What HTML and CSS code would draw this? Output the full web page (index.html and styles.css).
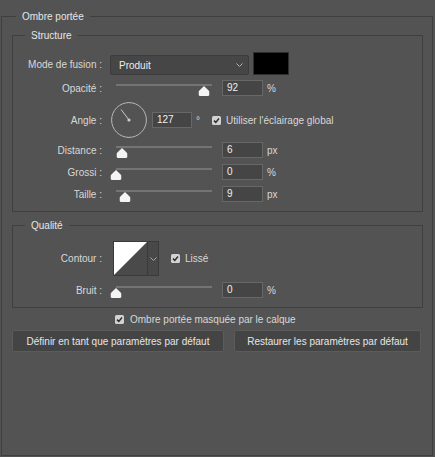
FILE: index.html
```html
<!DOCTYPE html>
<html lang="fr">
<head>
<meta charset="utf-8">
<title>Ombre portée</title>
<link rel="stylesheet" href="styles.css">
</head>
<body>
<fieldset class="dialog">
  <legend>Ombre portée</legend>

  <fieldset class="group structure">
    <legend>Structure</legend>

    <div class="row mode-row">
      <span class="lbl">Mode de fusion :</span>
      <div class="select">
        <span>Produit</span>
        <svg class="chev" width="7" height="4" viewBox="0 0 7 4"><polyline points="0.5,0.5 3.5,3.5 6.5,0.5" fill="none" stroke="#b4b4b4" stroke-width="1"/></svg>
      </div>
      <div class="swatch"></div>
    </div>

    <div class="row slider-row">
      <span class="lbl">Opacité :</span>
      <div class="slider"><div class="track"></div><svg class="thumb" style="left:92%" width="11" height="10" viewBox="0 0 11 10"><path d="M5.5 0 L10.6 5 Q11 5.4 11 6.2 L11 8.6 Q11 10 9.6 10 L1.4 10 Q0 10 0 8.6 L0 6.2 Q0 5.4 0.4 5 Z" fill="#f4f4f4"/></svg></div>
      <span class="field">92</span>
      <span class="unit">%</span>
    </div>

    <div class="row angle-row">
      <span class="lbl">Angle :</span>
      <svg class="dial" width="36" height="36" viewBox="0 0 36 36">
        <circle cx="18" cy="18" r="17.4" fill="none" stroke="#b9b9b9" stroke-width="1"/>
        <line x1="18" y1="18" x2="10" y2="7.4" stroke="#c8c8c8" stroke-width="1"/>
        <circle cx="18" cy="18" r="1.6" fill="#cfcfcf"/>
      </svg>
      <span class="field angle-field">127</span>
      <span class="unit">°</span>
      <svg class="check global-check" width="9" height="9" viewBox="0 0 9 9"><rect width="9" height="9" rx="1.6" fill="#d2d2d2"/><polyline points="2,4.6 3.8,6.4 7,2.5" fill="none" stroke="#2e2e2e" stroke-width="1.5"/></svg>
      <span class="check-text">Utiliser l'éclairage global</span>
    </div>

    <div class="row slider-row">
      <span class="lbl">Distance :</span>
      <div class="slider"><div class="track"></div><svg class="thumb" style="left:6.25%" width="11" height="10" viewBox="0 0 11 10"><path d="M5.5 0 L10.6 5 Q11 5.4 11 6.2 L11 8.6 Q11 10 9.6 10 L1.4 10 Q0 10 0 8.6 L0 6.2 Q0 5.4 0.4 5 Z" fill="#f4f4f4"/></svg></div>
      <span class="field">6</span>
      <span class="unit">px</span>
    </div>

    <div class="row slider-row">
      <span class="lbl">Grossi :</span>
      <div class="slider"><div class="track"></div><svg class="thumb" style="left:0%" width="11" height="10" viewBox="0 0 11 10"><path d="M5.5 0 L10.6 5 Q11 5.4 11 6.2 L11 8.6 Q11 10 9.6 10 L1.4 10 Q0 10 0 8.6 L0 6.2 Q0 5.4 0.4 5 Z" fill="#f4f4f4"/></svg></div>
      <span class="field">0</span>
      <span class="unit">%</span>
    </div>

    <div class="row slider-row">
      <span class="lbl">Taille :</span>
      <div class="slider"><div class="track"></div><svg class="thumb" style="left:9.4%" width="11" height="10" viewBox="0 0 11 10"><path d="M5.5 0 L10.6 5 Q11 5.4 11 6.2 L11 8.6 Q11 10 9.6 10 L1.4 10 Q0 10 0 8.6 L0 6.2 Q0 5.4 0.4 5 Z" fill="#f4f4f4"/></svg></div>
      <span class="field">9</span>
      <span class="unit">px</span>
    </div>
  </fieldset>

  <fieldset class="group quality">
    <legend>Qualité</legend>

    <div class="row contour-row">
      <span class="lbl">Contour :</span>
      <div class="contour">
        <svg class="contour-preview" width="33" height="33" viewBox="0 0 33 33"><rect width="33" height="33" fill="#4a4a4a"/><polygon points="0,0 33,0 0,33" fill="#ffffff"/></svg>
        <div class="contour-arrow"><svg width="7" height="4" viewBox="0 0 7 4"><polyline points="0.5,0.5 3.5,3.5 6.5,0.5" fill="none" stroke="#a8a8a8" stroke-width="1"/></svg></div>
      </div>
      <svg class="check smooth-check" width="9" height="9" viewBox="0 0 9 9"><rect width="9" height="9" rx="1.6" fill="#d2d2d2"/><polyline points="2,4.6 3.8,6.4 7,2.5" fill="none" stroke="#2e2e2e" stroke-width="1.5"/></svg>
      <span class="check-text">Lissé</span>
    </div>

    <div class="row slider-row">
      <span class="lbl">Bruit :</span>
      <div class="slider"><div class="track"></div><svg class="thumb" style="left:0%" width="11" height="10" viewBox="0 0 11 10"><path d="M5.5 0 L10.6 5 Q11 5.4 11 6.2 L11 8.6 Q11 10 9.6 10 L1.4 10 Q0 10 0 8.6 L0 6.2 Q0 5.4 0.4 5 Z" fill="#f4f4f4"/></svg></div>
      <span class="field">0</span>
      <span class="unit">%</span>
    </div>
  </fieldset>

  <div class="mask-row">
    <svg class="check" width="9" height="9" viewBox="0 0 9 9"><rect width="9" height="9" rx="1.6" fill="#d2d2d2"/><polyline points="2,4.6 3.8,6.4 7,2.5" fill="none" stroke="#2e2e2e" stroke-width="1.5"/></svg>
    <span class="check-text mask-text">Ombre portée masquée par le calque</span>
  </div>

  <div class="buttons">
    <div class="btn btn-set">Définir en tant que paramètres par défaut</div>
    <div class="btn btn-reset">Restaurer les paramètres par défaut</div>
  </div>
</fieldset>
</body>
</html>
```

FILE: styles.css
```css
* {
  box-sizing: border-box;
}

html,
body {
  margin: 0;
  height: 100%;
}

body {
  background: #535353;
  font-family: "Liberation Sans", Arial, sans-serif;
  font-size: 10px;
  color: #d8d8d8;
  display: flex;
  flex-direction: column;
}

.dialog {
  flex: 1;
  min-width: 0;
  margin: 10px 2px 1px 1px;
  padding: 6px 9px 0 10px;
  border: 1px solid #3f3f3f;
}

legend {
  line-height: 13px;
  padding: 0 6px;
  color: #e6e6e6;
}

.dialog > legend {
  margin-left: 4px;
}

.group {
  margin: 0;
  min-width: 0;
  border: 1px solid #3f3f3f;
}

.group > legend {
  margin-left: 12px;
}

.structure {
  padding: 10px 0 6px 0;
}

.quality {
  margin-top: 7px;
  padding: 9px 0 6px 0;
}

.row {
  display: flex;
  align-items: center;
}

.lbl {
  width: 89px;
  flex: none;
  text-align: right;
  white-space: nowrap;
}

/* Blend mode row */
.mode-row {
  height: 23px;
  margin-bottom: 2px;
  align-items: flex-end;
}

.mode-row .lbl {
  line-height: 20px;
}

.select {
  margin-left: 8px;
  width: 139px;
  height: 20px;
  background: #464646;
  border: 1px solid #3c3c3c;
  border-radius: 2px;
  display: flex;
  align-items: center;
  justify-content: space-between;
  padding: 0 5px 0 8px;
  color: #ececec;
}

.chev {
  display: block;
}

.swatch {
  margin-left: 4px;
  width: 36px;
  height: 23px;
  background: #000;
  border: 1px solid #2f2f2f;
}

/* Slider rows */
.slider-row {
  height: 22px;
}

.slider {
  position: relative;
  margin-left: 14px;
  width: 96px;
  height: 22px;
  flex: none;
}

.track {
  margin-top: 7px;
  height: 2px;
  background: #747474;
}

.thumb {
  position: absolute;
  top: 9px;
  transform: translateX(-50%);
  display: block;
}

.field {
  margin-left: 10px;
  width: 41px;
  height: 16px;
  flex: none;
  background: #454545;
  border: 1px solid #676767;
  padding-left: 4px;
  line-height: 14px;
  color: #f0f0f0;
}

.unit {
  margin-left: 4px;
}

/* Angle row */
.angle-row {
  height: 40px;
  padding-top: 2px;
}

.dial {
  margin-left: 9px;
  display: block;
  flex: none;
}

.angle-field {
  margin-left: 5px;
  width: 40px;
}

.check {
  display: block;
  flex: none;
}

.global-check {
  margin-left: 12px;
}

.check-text {
  margin-left: 5px;
  white-space: nowrap;
}

/* Contour row */
.contour-row {
  height: 35px;
  margin-bottom: 3px;
}

.contour {
  margin-left: 11px;
  width: 46px;
  height: 35px;
  border: 1px solid #3a3a3a;
  display: flex;
}

.contour-preview {
  display: block;
}

.contour-arrow {
  flex: 1;
  border-left: 1px solid #3a3a3a;
  background: #484848;
  display: flex;
  align-items: center;
  justify-content: center;
}

.contour-arrow svg {
  display: block;
}

.smooth-check {
  margin-left: 12px;
}

/* Bottom */
.mask-row {
  margin-top: 5px;
  height: 12px;
  padding-left: 103px;
  display: flex;
  align-items: center;
}

.mask-text {
  margin-left: 6px;
}

.buttons {
  margin-top: 5px;
  display: flex;
  gap: 10px;
}

.btn {
  height: 22px;
  background: #444444;
  border: 1px solid #5b5b5b;
  border-radius: 2px;
  display: flex;
  align-items: center;
  justify-content: center;
  color: #e6e6e6;
  white-space: nowrap;
}

.btn-set {
  width: 212px;
}

.btn-reset {
  width: 187px;
}
```
